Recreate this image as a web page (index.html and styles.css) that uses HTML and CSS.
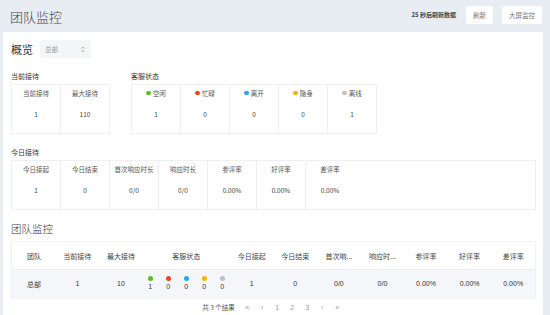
FILE: index.html
```html
<!DOCTYPE html>
<html lang="zh-CN">
<head>
    <meta charset="UTF-8">
    <title>团队监控</title>
    <link rel="stylesheet" href="styles.css">
</head>
<body>
    <div class="topbar">
        <h1>团队监控</h1>
        <div class="top-actions">
            <span class="countdown">25 秒后刷新数据</span>
            <button class="btn">刷新</button>
            <button class="btn btn-wide">大屏监控</button>
        </div>
    </div>

    <div class="main">
        <div class="overview">
            <span class="overview-title">概览</span>
            <div class="select">
                <span>总部</span>
                <svg width="4" height="7" viewBox="0 0 4 7"><path d="M0.5 2.5 L2 1 L3.5 2.5 M0.5 4.5 L2 6 L3.5 4.5" fill="none" stroke="#999" stroke-width="0.8"/></svg>
            </div>
        </div>

        <div class="groups">
            <div class="group">
                <div class="group-label">当前接待</div>
                <div class="stat-box">
                    <div class="cell"><span class="cell-head">当前接待</span><span class="cell-val">1</span></div>
                    <div class="cell"><span class="cell-head">最大接待</span><span class="cell-val">110</span></div>
                </div>
            </div>
            <div class="group">
                <div class="group-label">客服状态</div>
                <div class="stat-box">
                    <div class="cell"><span class="cell-head"><i class="dot green"></i>空闲</span><span class="cell-val">1</span></div>
                    <div class="cell"><span class="cell-head"><i class="dot red"></i>忙碌</span><span class="cell-val">0</span></div>
                    <div class="cell"><span class="cell-head"><i class="dot blue"></i>离开</span><span class="cell-val">0</span></div>
                    <div class="cell"><span class="cell-head"><i class="dot yellow"></i>隐身</span><span class="cell-val">0</span></div>
                    <div class="cell"><span class="cell-head"><i class="dot gray"></i>离线</span><span class="cell-val">1</span></div>
                </div>
            </div>
        </div>

        <div class="group today">
            <div class="group-label">今日接待</div>
            <div class="stat-box">
                <div class="cell"><span class="cell-head">今日接起</span><span class="cell-val">1</span></div>
                <div class="cell"><span class="cell-head">今日结束</span><span class="cell-val">0</span></div>
                <div class="cell"><span class="cell-head">首次响应时长</span><span class="cell-val">0/0</span></div>
                <div class="cell"><span class="cell-head">响应时长</span><span class="cell-val">0/0</span></div>
                <div class="cell"><span class="cell-head">参评率</span><span class="cell-val">0.00%</span></div>
                <div class="cell"><span class="cell-head">好评率</span><span class="cell-val">0.00%</span></div>
                <div class="cell"><span class="cell-head">差评率</span><span class="cell-val">0.00%</span></div>
            </div>
        </div>

        <h2 class="section-title">团队监控</h2>
        <div class="table">
            <div class="row head">
                <div class="td first">团队</div>
                <div class="td">当前接待</div>
                <div class="td">最大接待</div>
                <div class="td wide">客服状态</div>
                <div class="td">今日接起</div>
                <div class="td">今日结束</div>
                <div class="td">首次响...</div>
                <div class="td">响应时...</div>
                <div class="td">参评率</div>
                <div class="td">好评率</div>
                <div class="td">差评率</div>
            </div>
            <div class="row body">
                <div class="td first">总部</div>
                <div class="td num">1</div>
                <div class="td num">10</div>
                <div class="td wide status">
                    <span class="st"><i class="dot green"></i>1</span>
                    <span class="st"><i class="dot red"></i>0</span>
                    <span class="st"><i class="dot blue"></i>0</span>
                    <span class="st"><i class="dot yellow"></i>0</span>
                    <span class="st"><i class="dot gray"></i>0</span>
                </div>
                <div class="td num">1</div>
                <div class="td num">0</div>
                <div class="td num">0/0</div>
                <div class="td num">0/0</div>
                <div class="td num">0.00%</div>
                <div class="td num">0.00%</div>
                <div class="td num">0.00%</div>
            </div>
        </div>

        <div class="pager">
            <span class="total">共 3 个结果</span>
            <span class="pg">«</span>
            <span class="pg">‹</span>
            <span class="pg">1</span>
            <span class="pg">2</span>
            <span class="pg">3</span>
            <span class="pg">›</span>
            <span class="pg">»</span>
        </div>
    </div>
</body>
</html>
```

FILE: styles.css
```css
html, body {
    margin: 0;
    height: 100%;
}
body {
    font-family: "Noto Sans CJK SC", "Noto Sans", sans-serif;
    background-color: #e8ecf3;
    color: #333;
    overflow: hidden;
}
.topbar {
    height: 32px;
    display: flex;
    align-items: center;
    justify-content: space-between;
    padding: 0 8px 0 10px;
}
h1 {
    margin: 0;
    font-size: 13px;
    font-weight: 300;
    color: #444;
}
.top-actions {
    display: flex;
    align-items: center;
    gap: 6px;
    margin-top: -3px;
}
.countdown {
    font-size: 6px;
    font-weight: 600;
    color: #444;
    margin-right: 2px;
}
.btn {
    height: 18px;
    width: 27px;
    padding: 0;
    border: none;
    border-radius: 2px;
    background-color: #fff;
    color: #777;
    font-family: inherit;
    font-size: 6.5px;
    margin-left: 2px;
}
.btn-wide {
    width: 40px;
    margin-left: 3px;
}
.main {
    background-color: #fff;
    margin: 0 7px 0 3px;
    padding: 8px 7px 0 8px;
    height: calc(100% - 40px);
}
.overview {
    display: flex;
    align-items: center;
    height: 18px;
}
.overview-title {
    font-size: 11px;
    width: 29px;
}
.select {
    width: 51px;
    height: 18px;
    box-sizing: border-box;
    background-color: #f4f5f7;
    border-radius: 2px;
    display: flex;
    align-items: center;
    justify-content: space-between;
    padding: 0 6px 0 5px;
    font-size: 6.5px;
    color: #999;
}
.groups {
    display: flex;
    gap: 21px;
    margin-top: 13px;
}
.group-label {
    font-size: 7px;
    line-height: 10px;
    height: 10px;
    color: #333;
    margin-bottom: 3px;
}
.stat-box {
    display: flex;
    border: 1px solid #eef0f3;
}
.cell {
    width: 48px;
    height: 48px;
    border-right: 1px solid #eef0f3;
    display: flex;
    flex-direction: column;
    align-items: center;
    font-size: 6.5px;
    color: #444;
}
.cell:last-child {
    border-right: none;
}
.cell-head {
    margin-top: 3px;
    line-height: 10px;
    display: flex;
    align-items: center;
    color: #555;
}
.cell-val {
    margin-top: 11px;
    line-height: 10px;
}
.dot {
    display: inline-block;
    width: 4.5px;
    height: 4.5px;
    border-radius: 50%;
    margin-right: 2px;
}
.green { background-color: #52c41a; }
.red { background-color: #f5421d; }
.blue { background-color: #2ba5f0; }
.yellow { background-color: #f5b400; }
.gray { background-color: #bfbfbf; }
.today {
    margin-top: 13px;
}
.section-title {
    margin: 12px 0 0;
    font-size: 10.5px;
    font-weight: 300;
    line-height: 14px;
    color: #333;
}
.table {
    margin-top: 5px;
    border: 1px solid #f0f2f5;
    box-shadow: 0 1px 2px rgba(0, 0, 0, 0.04);
}
.row {
    display: grid;
    grid-template-columns: repeat(3, 1fr) 2fr repeat(7, 1fr);
    height: 27px;
    align-items: center;
    font-size: 7px;
}
.row.head {
    color: #444;
    border-bottom: 1px solid #eef0f3;
}
.row.body {
    background-color: #f4f6f9;
    color: #333;
}
.td {
    text-align: center;
    white-space: nowrap;
}
.td.first {
    text-align: left;
    padding-left: 15px;
}
.num {
    font-family: "Liberation Sans", Arial, sans-serif;
    font-size: 7px;
}
.status {
    display: flex;
    justify-content: center;
    gap: 7px;
    font-family: "Liberation Sans", Arial, sans-serif;
    font-size: 7px;
}
.st {
    width: 11px;
    display: flex;
    flex-direction: column;
    align-items: center;
    line-height: 8px;
}
.st .dot {
    width: 5.5px;
    height: 5.5px;
    margin: 0 0 2px;
}
.pager {
    display: flex;
    justify-content: center;
    align-items: center;
    margin-top: 4px;
    font-size: 6.5px;
    color: #999;
}
.total {
    color: #555;
    margin-right: 5px;
}
.pg {
    width: 15px;
    text-align: center;
    font-family: "Liberation Sans", Arial, sans-serif;
    font-size: 7px;
}
```
